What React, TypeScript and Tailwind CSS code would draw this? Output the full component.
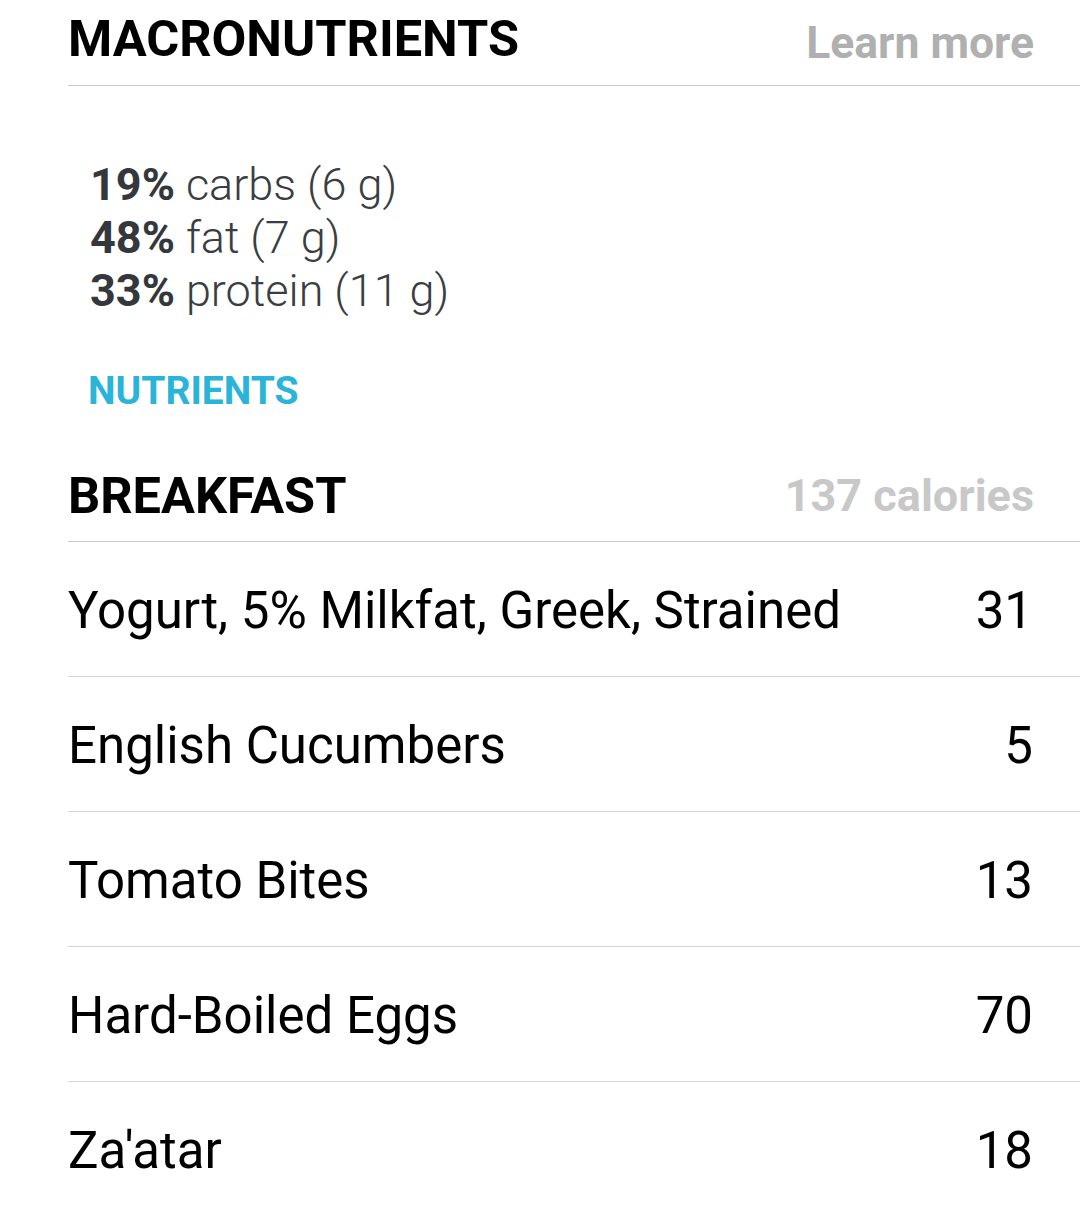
const macros = [
  { pct: "19%", label: "carbs (6 g)" },
  { pct: "48%", label: "fat (7 g)" },
  { pct: "33%", label: "protein (11 g)" },
];

const foods = [
  { name: "Yogurt, 5% Milkfat, Greek, Strained", cals: 31 },
  { name: "English Cucumbers", cals: 5 },
  { name: "Tomato Bites", cals: 13 },
  { name: "Hard-Boiled Eggs", cals: 70 },
  { name: "Za'atar", cals: 18 },
];

export default function App() {
  return (
    <div
      className="min-h-[1211px] w-[1080px] overflow-hidden bg-white"
      style={{ fontFamily: "Roboto, 'Noto Sans', sans-serif" }}
    >
      <div className="ml-[68px]">
        {/* Macronutrients header */}
        <div className="flex h-[86px] items-center justify-between border-b border-[#c8c8c8] pr-[46px]">
          <h1 className="-mt-2 text-[50.5px] font-bold leading-[60px] text-black">MACRONUTRIENTS</h1>
          <span className="text-[44.5px] font-bold leading-[52px] text-[#b0b0b0]">Learn more</span>
        </div>

        {/* Breakdown */}
        <div className="pl-[22px] pt-[72px]">
          {macros.map((m) => (
            <p key={m.pct} className="text-[45px] font-light leading-[53px] text-[#3a3e42]">
              <span className="font-bold text-[#34383c]">{m.pct}</span> {m.label}
            </p>
          ))}
        </div>

        <div className="mt-[52px] pl-[20px]">
          <span className="text-[39px] font-bold leading-[45px] text-[#2bb4d9]">NUTRIENTS</span>
        </div>

        {/* Breakfast */}
        <div className="flex h-[128px] items-end justify-between border-b border-[#c8c8c8] pb-[17px] pr-[46px]">
          <h2 className="text-[50.5px] font-bold leading-[56px] text-black">BREAKFAST</h2>
          <span className="text-[45px] font-bold leading-[56px] text-[#c8c8c8]">137 calories</span>
        </div>

        {foods.map((f) => (
          <div
            key={f.name}
            className="flex h-[135px] items-center justify-between border-b border-[#d4d4d4] pr-[47px] pt-1"
          >
            <span className="text-[51px] leading-[58px] text-black">{f.name}</span>
            <span className="text-[51px] leading-[58px] text-black">{f.cals}</span>
          </div>
        ))}
      </div>
    </div>
  );
}
